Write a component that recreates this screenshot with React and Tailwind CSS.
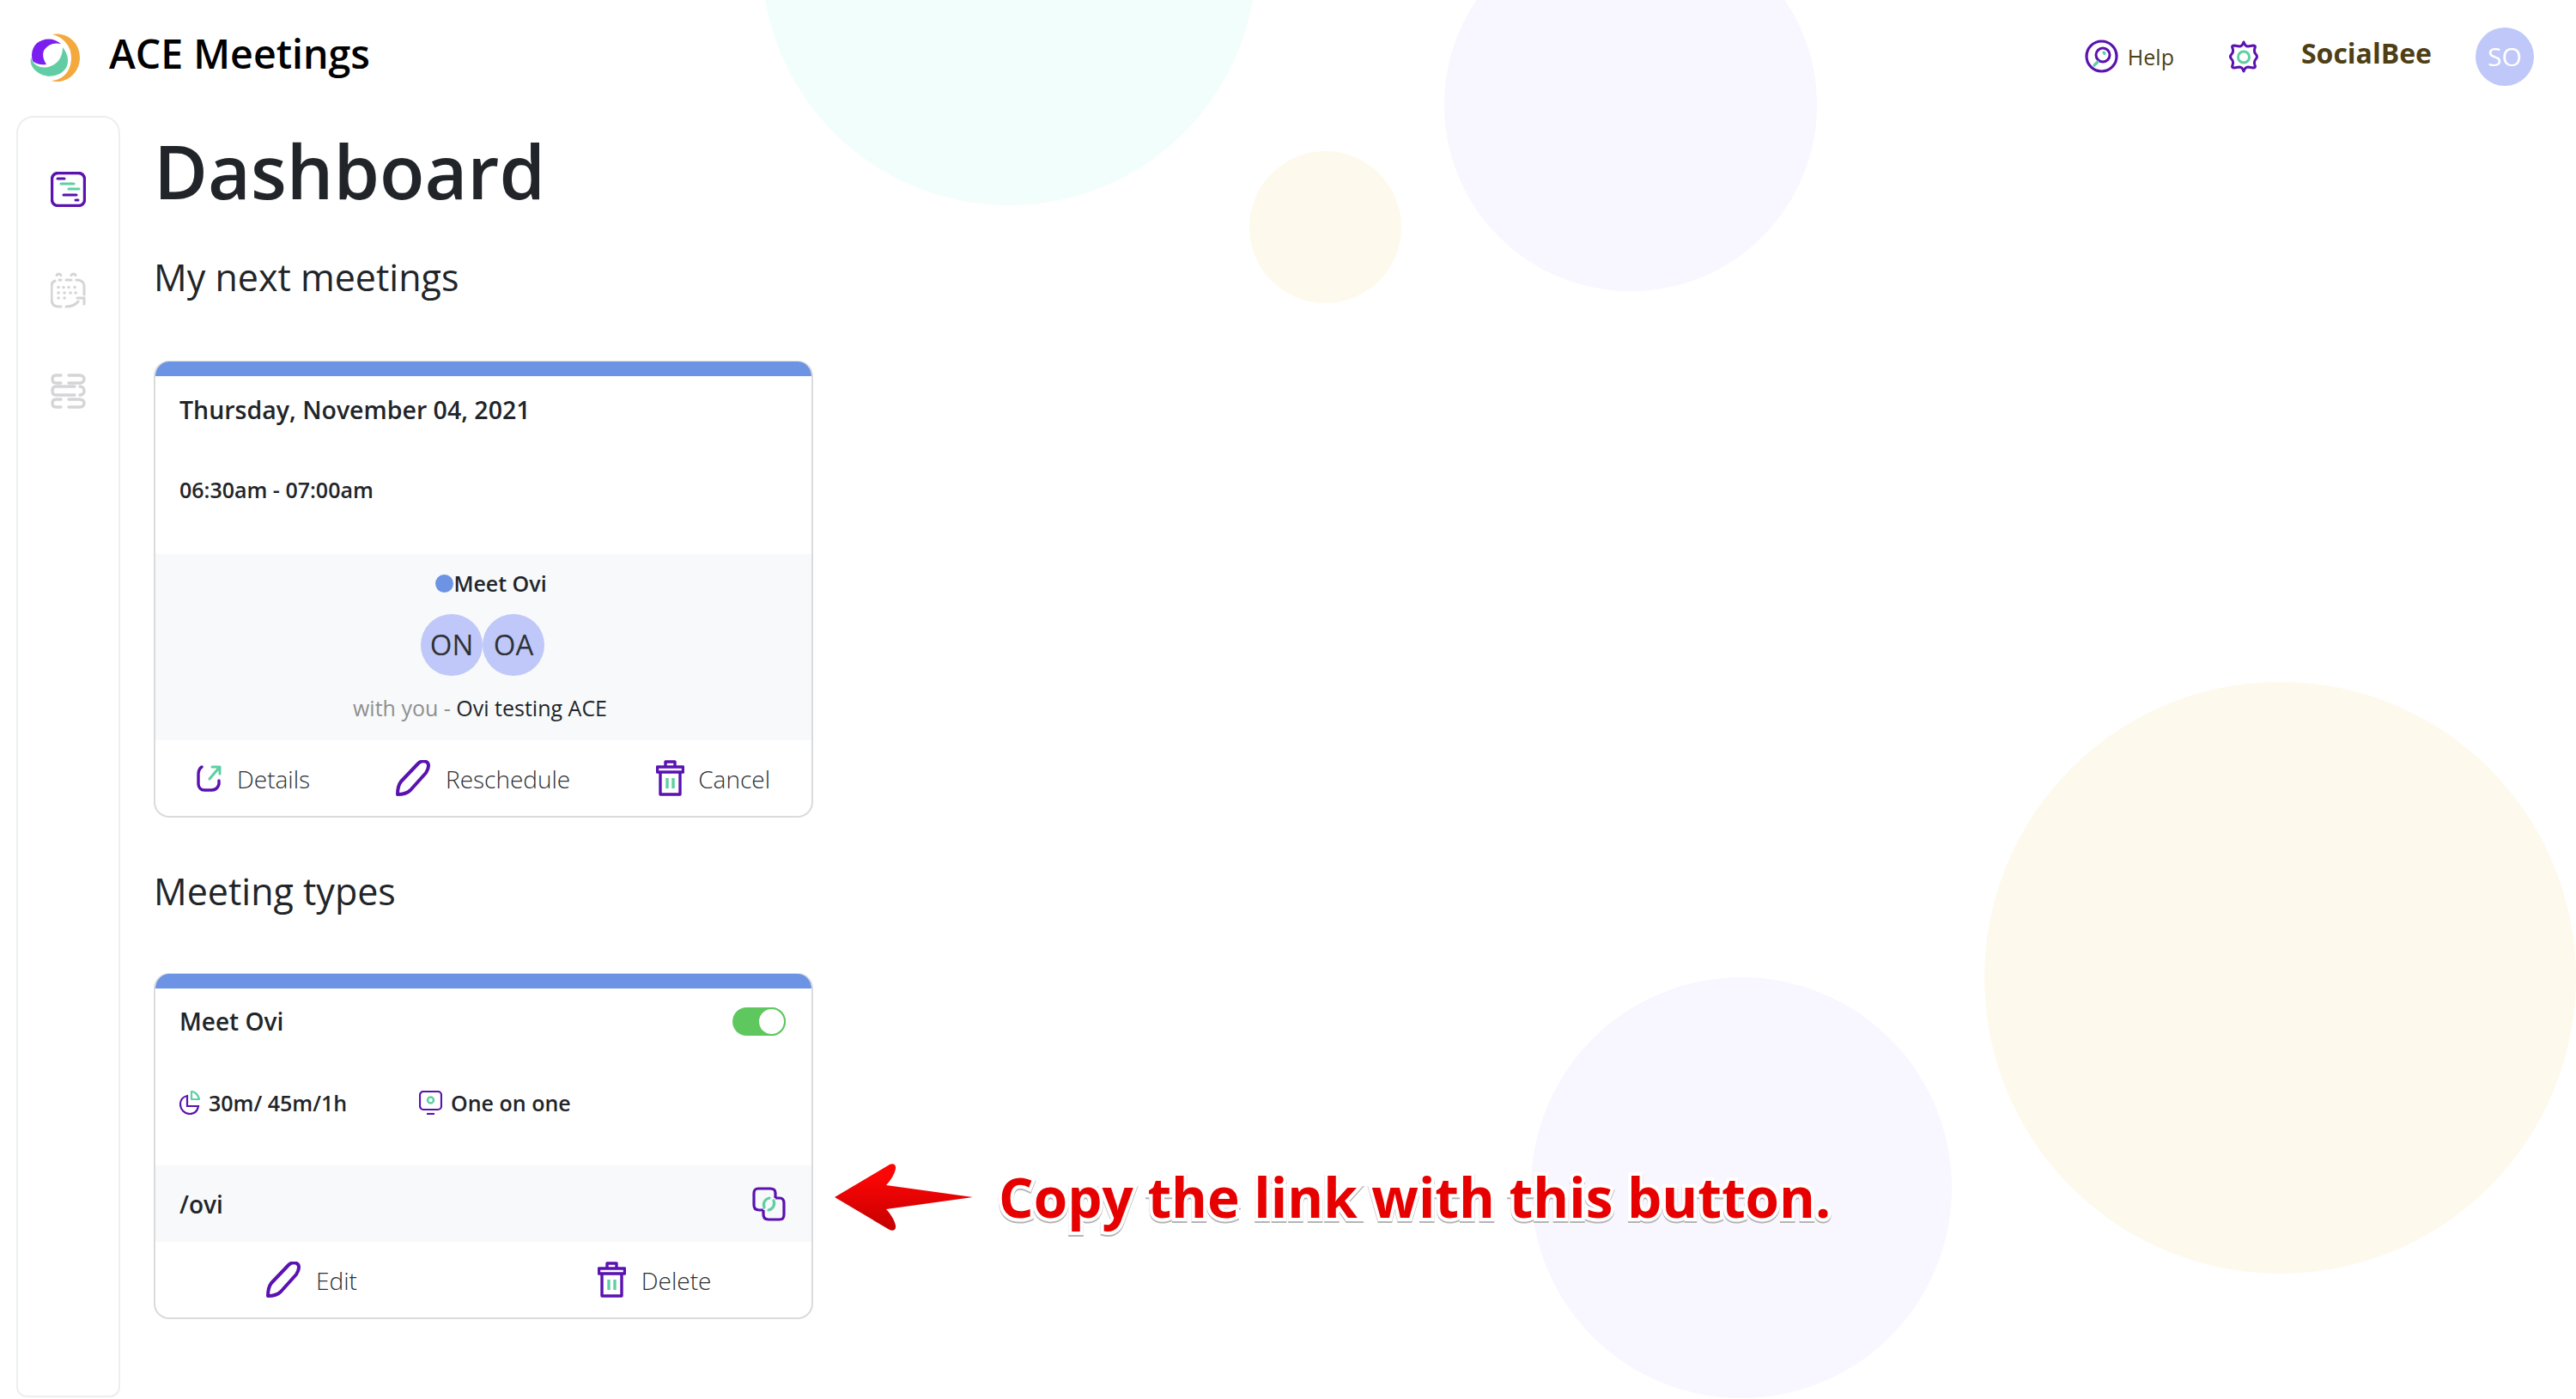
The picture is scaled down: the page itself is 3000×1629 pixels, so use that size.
import { useState } from "react";

const PURPLE = "#5a12b0";
const GREEN = "#5fcfa3";

function Logo() {
  return (
    <svg width="58" height="58" viewBox="0 0 58 58" fill="none">
      <path d="M26 1C40-2 58 8 58 28 58 46 42 60 24 55 36 55 48 46 48 28 48 14 38 4 26 1Z" fill="#f3a93d" />
      <path d="M1 28C4 38 14 42 24 38 32 35 38 28 38 16 44 24 46 32 42 40 36 49 24 52 14 48 5 44-1 37 1 28Z" fill="#62cda4" />
      <path d="M3 32C0 22 4 11 14 8 22 5 30 7 36 12 28 10 20 13 16 20 14 26 16 31 19 36 12 37 6 35 3 32Z" fill="#7b1ff0" />
    </svg>
  );
}

function DashboardIcon() {
  return (
    <svg width="41" height="41" viewBox="0 0 41 41" fill="none" strokeLinecap="round">
      <rect x="1.500" y="1.500" width="38" height="38" rx="7" stroke={PURPLE} strokeWidth="3.400" />
      <path d="M8 8h8M15 27h15M29 33h3" stroke={PURPLE} strokeWidth="3" />
      <path d="M12 14h15M21 20h12" stroke={GREEN} strokeWidth="3" />
    </svg>
  );
}

function CalendarIcon() {
  return (
    <svg width="41" height="42" viewBox="0 0 41 42" fill="none" stroke="#d5d5d7" strokeWidth="3" strokeLinecap="round">
      <path d="M7 3.500c1-2 4-2 5 0M24 3.500c1-2 4-2 5 0" />
      <path d="M5 10c-3 1-4 3-4 6v15c0 6 3 9 8 9h3M18 40c6 0 11-2 14-6M10 9h2M18 9h6M30 9c6 0 9 3 9 7v10" />
      <path d="M31 30h8v7" />
      <path d="M9 17.500h.1M15 17.500h.1M21 17.500h.1M28 17.500h.1M9 24h.1M16 24h.1M23 24h.1M29 24h.1M9 30h.1M16 30h.1" strokeWidth="3.500" />
    </svg>
  );
}

function ListIcon() {
  return (
    <svg width="41" height="41" viewBox="0 0 41 41" fill="none" stroke="#d5d5d7" strokeWidth="3.400" strokeLinecap="round">
      <path d="M12 2H6C3 2 2 4 2 6.500S3 11 6 11h6M21 2h13c3 0 5 2 5 4.500S37 11 34 11H21" />
      <path d="M28 15H6c-3 0-4 2-4 5s1 5 4 5h22M34 15c3 0 5 2 5 5s-2 5-5 5" />
      <path d="M12 30H6c-3 0-4 2-4 4.500S3 39 6 39h6M21 30h13c3 0 5 2 5 4.500S37 39 34 39H21" />
    </svg>
  );
}

function HelpIcon() {
  return (
    <svg width="39" height="39" viewBox="0 0 39 39" fill="none" strokeWidth="3.200" strokeLinecap="round">
      <circle cx="19.500" cy="19.500" r="17.500" stroke={PURPLE} />
      <circle cx="21" cy="18" r="8" stroke={PURPLE} strokeWidth="3" />
      <path d="M11 30l4-4M22 15l1 1.500" stroke={GREEN} />
    </svg>
  );
}

function GearIcon() {
  return (
    <svg width="34" height="38" viewBox="0 0 34 38" fill="none" strokeWidth="3" strokeLinejoin="round">
      <path d="M17 2c1 3 3 5 5 5l6-1c2 0 3 1 2 3-1 3-1 5 1 7s2 4 0 6-2 4-1 7c1 2 0 3-2 3l-6-1c-2 0-4 2-5 5-1-3-3-5-5-5l-6 1c-2 0-3-1-2-3 1-3 1-5-1-7s-2-4 0-6 2-4 1-7c-1-2 0-3 2-3l6 1c2 0 4-2 5-5z" stroke={PURPLE} />
      <circle cx="17" cy="19.500" r="6.500" stroke={GREEN} />
    </svg>
  );
}

function ShareIcon() {
  return (
    <svg width="30" height="32" viewBox="0 0 30 32" fill="none" strokeWidth="3.400" strokeLinecap="round" strokeLinejoin="round">
      <path d="M6 3C3 5 2 8 2 12v11c0 4 3 7 7 7h8c5 0 8-3 9-7v-4" stroke={PURPLE} />
      <path d="M15 17L26 4M18 3h9v8" stroke={GREEN} strokeWidth="3" />
    </svg>
  );
}

function PencilIcon() {
  return (
    <svg width="40" height="42" viewBox="0 0 40 42" fill="none" strokeWidth="4" strokeLinejoin="round">
      <path d="M2 40C2 34 3 29 6 25L26 4C30 0 36 1 37.500 4 39 8 37 12 35 15L17 35C13 39 8 40 2 40Z" stroke={PURPLE} />
    </svg>
  );
}

function TrashIcon() {
  return (
    <svg width="33" height="42" viewBox="0 0 33 42" fill="none" strokeWidth="3.400" strokeLinejoin="round">
      <path d="M11 8V2h11v6M1.500 8h30v6h-30zM5 14v26h23V14" stroke={PURPLE} />
      <path d="M13 21v12M20 21v12" stroke={GREEN} />
    </svg>
  );
}

function DurationIcon() {
  return (
    <svg width="24" height="28" viewBox="0 0 24 28" fill="none" strokeWidth="2.200">
      <path d="M9 6C4 7 1 11 1 16c0 6 5 11 11 11 5 0 9-3 10-9H9z" stroke={PURPLE} />
      <path d="M14 1c4 0 8 4 9 9h-9z" stroke={GREEN} strokeLinejoin="round" />
    </svg>
  );
}

function ScreenIcon() {
  return (
    <svg width="27" height="28" viewBox="0 0 27 28" fill="none" strokeWidth="2.200">
      <rect x="1" y="1" width="25" height="21" rx="4" stroke={PURPLE} />
      <path d="M9 27h9" stroke={PURPLE} />
      <circle cx="13.500" cy="11" r="3.500" stroke={GREEN} strokeWidth="2.500" />
    </svg>
  );
}

function CopyIcon() {
  return (
    <svg width="39" height="40" viewBox="0 0 39 40" fill="none" strokeWidth="3.200" strokeLinejoin="round">
      <path d="M27 13V7c0-3-2-5-6-5H7C3 2 2 4 2 8v13c0 4 2 6 6 6h5" stroke={PURPLE} />
      <path d="M13 27v5c0 4 2 6 6 6h13c4 0 5-2 5-6V19c0-4-2-6-5-6h-5" stroke={PURPLE} />
      <path d="M14 24c-2-5 1-10 6-11M25 16c2 5-1 10-6 11" stroke={GREEN} strokeLinecap="round" />
    </svg>
  );
}

function Arrow() {
  return (
    <svg width="161" height="78" viewBox="0 0 161 78">
      <defs>
        <linearGradient id="arrowRed" x1="0" y1="0" x2="0" y2="1">
          <stop offset="0.2" stopColor="#fb0505" />
          <stop offset="1" stopColor="#c40000" />
        </linearGradient>
      </defs>
      <path d="M0 39L64 1c4-2 8 0 7 5-1 6-6 14-11 19l101 14-101 14c5 5 10 13 11 19 1 5-3 7-7 5z" fill="url(#arrowRed)" />
    </svg>
  );
}

function Action({ icon, label, className = "" }) {
  return (
    <div className={`flex items-center ${className}`}>
      {icon}
      <span className="mt-[1px] text-[28px] font-light text-[#2b2f33]">{label}</span>
    </div>
  );
}

function Card({ children }) {
  return (
    <div className="w-[768px] overflow-hidden rounded-[18px] border-2 border-t border-[#d9dbdc] bg-white">
      <div className="h-[17px] bg-[#6c93e4]" />
      {children}
    </div>
  );
}

function NextMeetingCard() {
  return (
    <Card>
      <div className="flex h-[207px] flex-col px-[28px] pt-[19px] font-semibold text-[#212529]">
        <div className="text-[28.5px] leading-[40px]">Thursday, November 04, 2021</div>
        <div className="mt-[56px] text-[25px] leading-[34px]">06:30am - 07:00am</div>
      </div>
      <div className="flex h-[217px] flex-col items-center bg-[#f8f9fa] pt-[16px]">
        <div className="flex items-center pl-[18px] text-[25px] font-semibold leading-[36px] text-[#212529]">
          <span className="h-[21px] w-[21px] rounded-full bg-[#6c93e4]" />
          Meet Ovi
        </div>
        <div className="mt-[18px] flex pr-[2px]">
          <span className="flex h-[72px] w-[72px] items-center justify-center rounded-full bg-[#bfc8f8] text-[33px] text-[#2f3136]">ON</span>
          <span className="flex h-[72px] w-[72px] items-center justify-center rounded-full bg-[#bfc8f8] text-[33px] text-[#2f3136]">OA</span>
        </div>
        <div className="mt-[19px] pr-[8px] text-[25px] leading-[36px] text-[#8f8f8f]">
          with you - <span className="text-[#212529]">Ovi testing ACE</span>
        </div>
      </div>
      <div className="flex h-[88px] items-center justify-between pl-[48px] pr-[48px]">
        <Action icon={<ShareIcon />} label="Details" className="gap-[17px]" />
        <Action icon={<PencilIcon />} label="Reschedule" className="gap-[18px]" />
        <Action icon={<TrashIcon />} label="Cancel" className="gap-[16px]" />
      </div>
    </Card>
  );
}

function MeetingTypeCard() {
  const [enabled, setEnabled] = useState(true);

  return (
    <Card>
      <div className="flex h-[206px] flex-col pl-[28px] pr-[30px] pt-[18px] text-[#212529]">
        <div className="flex items-center justify-between">
          <span className="text-[28px] font-semibold leading-[40px]">Meet Ovi</span>
          <button
            onClick={() => setEnabled((prev) => !prev)}
            className={`flex h-[33px] w-[62px] items-center justify-end rounded-full ${enabled ? "bg-[#5ec85e]" : "bg-gray-300"}`}
          >
            <span className="h-[33px] w-[33px] rounded-full border-2 border-[#5ec85e] bg-white" />
          </button>
        </div>
        <div className="mt-[57px] flex items-center text-[25px] font-semibold leading-[36px]">
          <DurationIcon />
          <span className="ml-[10px]">30m/ 45m/1h</span>
          <span className="ml-[84px]"><ScreenIcon /></span>
          <span className="ml-[10px]">One on one</span>
        </div>
      </div>
      <div className="flex h-[89px] items-center justify-between bg-[#f8f9fa] pl-[28px] pr-[30px]">
        <span className="text-[28px] font-semibold text-[#212529]">/ovi</span>
        <CopyIcon />
      </div>
      <div className="flex h-[88px] items-center pl-[129px]">
        <Action icon={<PencilIcon />} label="Edit" className="gap-[18px]" />
        <Action icon={<TrashIcon />} label="Delete" className="ml-[280px] gap-[18px]" />
      </div>
    </Card>
  );
}

function App() {
  return (
    <div className="relative h-[1629px] w-full overflow-hidden bg-white font-['Open_Sans',sans-serif]">
      {/* background circles */}
      <div className="absolute left-[887px] top-[-337px] h-[576px] w-[576px] rounded-full bg-[#f1fefb]" />
      <div className="absolute left-[1682px] top-[-95px] h-[434px] w-[434px] rounded-full bg-[#f8f6fe]" />
      <div className="absolute left-[1455px] top-[176px] h-[177px] w-[177px] rounded-full bg-[#fdf9ec]" />
      <div className="absolute left-[2311px] top-[794px] h-[689px] w-[689px] rounded-full bg-[#fdf9ec]" />
      <div className="absolute left-[1783px] top-[1138px] h-[490px] w-[490px] rounded-full bg-[#f8f6fe]" />

      <header className="relative flex h-[135px] items-center pl-[35px]">
        <Logo />
        <div className="ml-[34px] mt-[-10px] text-[46.500px] font-semibold text-black">ACE Meetings</div>
        <div className="ml-auto mt-[-4px] flex items-center pr-[49px]">
          <HelpIcon />
          <span className="ml-[11px] mt-[2px] text-[25px] text-[#4e3f16]">Help</span>
          <span className="ml-[64px]"><GearIcon /></span>
          <span className="ml-[50px] mt-[-7px] text-[32px] font-bold text-[#4e3f16]">SocialBee</span>
          <span className="ml-[51px] flex h-[68px] w-[68px] items-center justify-center rounded-full bg-[#bfc8f8] text-[30px] text-white">SO</span>
        </div>
      </header>

      <div className="relative flex">
        <aside className="ml-[19px] flex h-[1492px] w-[121px] flex-col items-center gap-[76px] rounded-t-[20px] rounded-b-[12px] border-2 border-[#eceef0] bg-white pt-[63px]">
          <DashboardIcon />
          <CalendarIcon />
          <ListIcon />
        </aside>

        <main className="ml-[39px] text-[#212529]">
          <h1 className="mt-[10px] text-[86px] font-semibold leading-[108px]">Dashboard</h1>
          <h2 className="mt-[40px] text-[43px] leading-[60px]">My next meetings</h2>
          <div className="mt-[67px]">
            <NextMeetingCard />
          </div>
          <h2 className="mt-[56px] text-[43px] leading-[60px]">Meeting types</h2>
          <div className="relative mt-[65px]">
            <MeetingTypeCard />
            <div className="absolute left-[793px] top-[222px] flex items-center gap-[30px]">
              <Arrow />
              <span className="whitespace-nowrap text-[63.800px] font-bold leading-[78px] text-[#e60000] [-webkit-text-stroke:8px_white] [paint-order:stroke_fill] [filter:drop-shadow(0_2px_0_#b5b5b5)]">
                Copy the link with this button.
              </span>
            </div>
          </div>
        </main>
      </div>
    </div>
  );
}

export default App;
